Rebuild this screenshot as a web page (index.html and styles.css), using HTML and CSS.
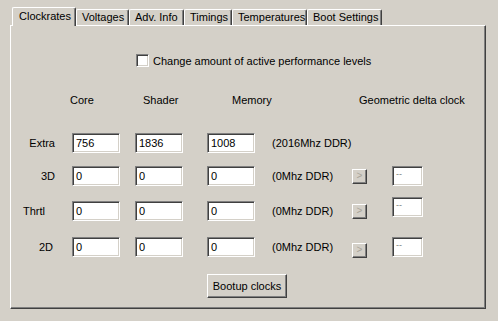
FILE: index.html
```html
<!DOCTYPE html>
<html lang="en">
<head>
  <meta charset="UTF-8" />
  <title>Clockrates</title>
  <link rel="stylesheet" href="styles.css">
</head>
<body>
  <div class="tabs">
    <span class="tab active">Clockrates</span>
    <span class="tab t-volt">Voltages</span>
    <span class="tab t-adv">Adv. Info</span>
    <span class="tab t-tim">Timings</span>
    <span class="tab t-temp">Temperatures</span>
    <span class="tab t-boot">Boot Settings</span>
  </div>

  <div class="panel">
    <label class="opt">
      <span class="check"></span>
      <span>Change amount of active performance levels</span>
    </label>

    <div class="heads">
      <span class="h-core">Core</span>
      <span class="h-shader">Shader</span>
      <span class="h-mem">Memory</span>
      <span class="h-geo">Geometric delta clock</span>
    </div>

    <div class="row">
      <span class="lbl">Extra</span>
      <span class="field f1">756</span>
      <span class="field f2">1836</span>
      <span class="field f3">1008</span>
      <span class="ddr">(2016Mhz DDR)</span>
    </div>
    <div class="row">
      <span class="lbl">3D</span>
      <span class="field f1">0</span>
      <span class="field f2">0</span>
      <span class="field f3">0</span>
      <span class="ddr">(0Mhz DDR)</span>
      <span class="arrow">&gt;</span>
      <span class="delta">--</span>
    </div>
    <div class="row r-thrtl">
      <span class="lbl">Thrtl</span>
      <span class="field f1">0</span>
      <span class="field f2">0</span>
      <span class="field f3">0</span>
      <span class="ddr">(0Mhz DDR)</span>
      <span class="arrow">&gt;</span>
      <span class="delta">--</span>
    </div>
    <div class="row r-2d">
      <span class="lbl">2D</span>
      <span class="field f1">0</span>
      <span class="field f2">0</span>
      <span class="field f3">0</span>
      <span class="ddr">(0Mhz DDR)</span>
      <span class="arrow">&gt;</span>
      <span class="delta">--</span>
    </div>

    <button class="boot">Bootup clocks</button>
  </div>
</body>
</html>
```

FILE: styles.css
```css
* { box-sizing: border-box; }
body {
  margin: 0;
  width: 498px; height: 321px;
  background: #d4d0c8;
  font-family: "Liberation Sans", Arial, sans-serif;
  font-size: 11px;
  color: #000;
  overflow: hidden;
}

/* tab strip */
.tabs {
  display: flex; align-items: flex-end;
  height: 25px;
  padding-left: 12px;
}
.tab {
  position: relative;
  height: 16px; line-height: 15px;
  padding: 0 0 0 5px;
  border-top: 1px solid #fff;
  border-left: 1px solid #fff;
  border-right: 1px solid #404040;
  box-shadow: inset -1px 0 0 #808080;
  border-radius: 2px 2px 0 0;
}
.tab.active {
  width: 64px;
  height: 19px; line-height: 17px;
  padding-left: 6px;
  margin-bottom: -1px;
  z-index: 2;
  background: #d4d0c8;
}
.t-volt { width: 53px; }
.t-adv { width: 55px; }
.t-tim { width: 48px; }
.t-temp { width: 75px; }
.t-boot { width: 75px; }

/* tab page */
.panel {
  margin-left: 10px;
  width: 476px; height: 284px;
  border-top: 1px solid #fff;
  border-left: 1px solid #fff;
  border-right: 1px solid #404040;
  border-bottom: 1px solid #404040;
  box-shadow: inset -1px -1px 0 #808080;
}

.opt {
  display: flex; align-items: center; gap: 4px;
  margin: 28px 0 0 125px;
  height: 13px;
}
.check {
  width: 13px; height: 13px;
  background: #fff;
  border-top: 1px solid #808080; border-left: 1px solid #808080;
  border-right: 1px solid #fff; border-bottom: 1px solid #fff;
  box-shadow: inset 1px 1px 0 #404040, inset -1px -1px 0 #d4d0c8;
}

.heads {
  display: flex;
  margin-top: 26px;
  height: 14px; line-height: 14px;
  padding-left: 59px;
}
.h-core { width: 73px; }
.h-shader { width: 89px; }
.h-mem { width: 127px; }

.row {
  display: flex; align-items: center;
  height: 20px;
  margin-top: 14px;
}
.heads + .row { margin-top: 26px; }
.row + .row { margin-top: 13px; }
.row + .row + .row { margin-top: 15px; }
.row + .row + .row + .row { margin-top: 16px; }

.lbl { width: 44px; text-align: right; margin-right: 17px; }
.r-thrtl .lbl { padding-right: 10px; }
.r-2d .lbl { padding-right: 2px; }

.field, .delta {
  height: 20px; line-height: 18px;
  padding-left: 3px;
  background: #fff;
  border-top: 1px solid #808080; border-left: 1px solid #808080;
  border-right: 1px solid #fff; border-bottom: 1px solid #fff;
  box-shadow: inset 1px 1px 0 #404040, inset -1px -1px 0 #d4d0c8;
}
.field { width: 48px; }
.f2 { margin-left: 15px; }
.f3 { margin-left: 24px; }
.ddr { width: 80px; margin-left: 17px; }

.arrow {
  width: 15px; height: 15px;
  line-height: 12px; text-align: center;
  font-size: 10px;
  color: #a8a498;
  border-top: 1px solid #fff; border-left: 1px solid #fff;
  border-right: 1px solid #404040; border-bottom: 1px solid #404040;
  box-shadow: inset -1px -1px 0 #808080;
}
.r-2d .arrow { margin-top: 6px; }
.delta {
  width: 31px;
  margin-left: 25px;
  line-height: 14px;
  color: #808080; font-size: 9px;
}
.r-thrtl .delta { margin-top: -9px; }

.boot {
  display: block;
  margin: 17px 0 0 196px;
  width: 80px; height: 24px;
  padding: 0;
  font: inherit; color: #000;
  background: #d4d0c8;
  border-top: 1px solid #fff; border-left: 1px solid #fff;
  border-right: 1px solid #404040; border-bottom: 1px solid #404040;
  box-shadow: inset -1px -1px 0 #808080;
  border-radius: 0;
}
```
